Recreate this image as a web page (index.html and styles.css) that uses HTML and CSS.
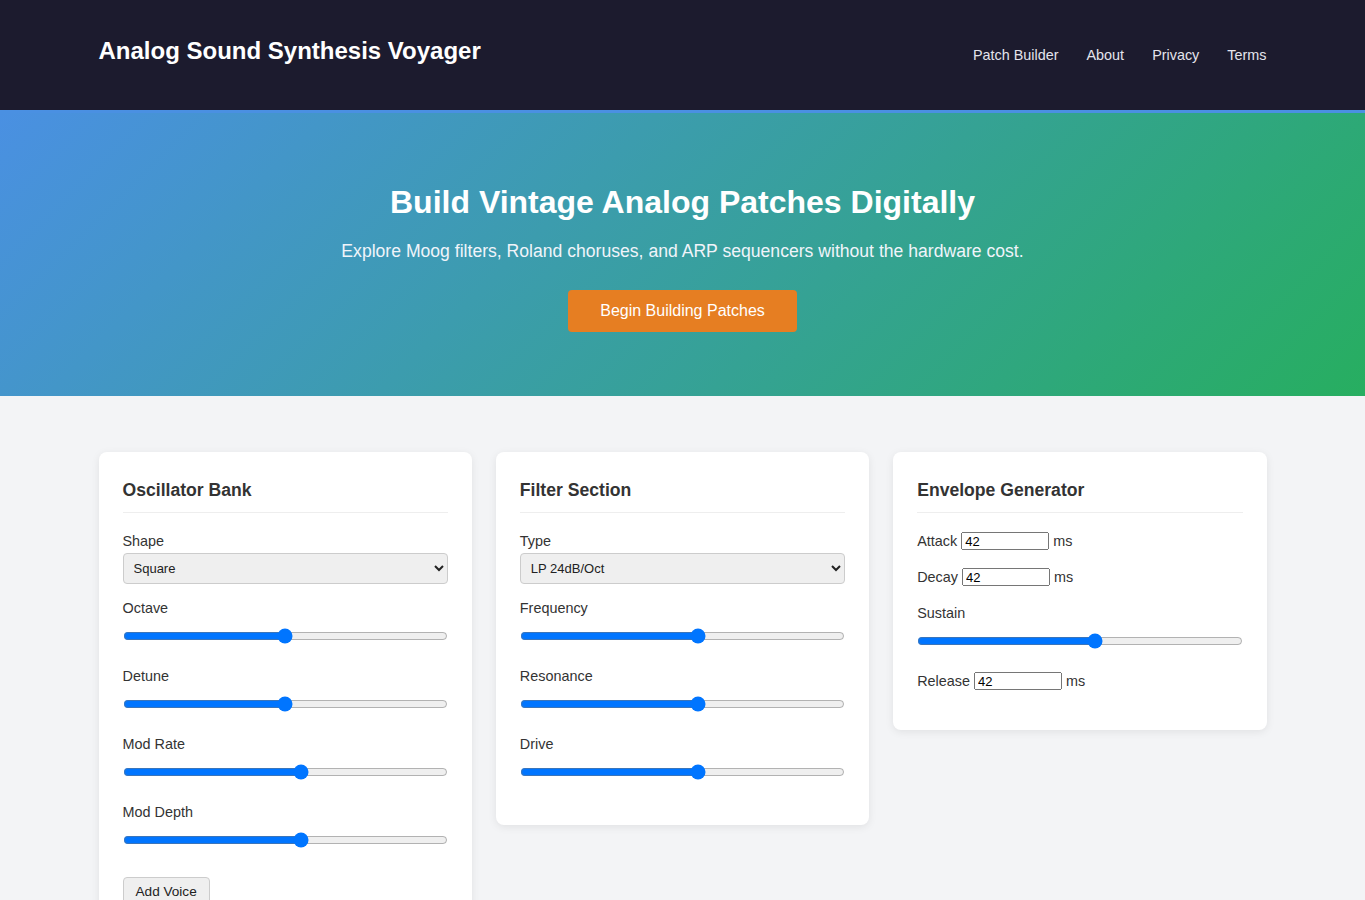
FILE: index.html
```html
<!DOCTYPE html>
<html lang="en">
<head>
    <meta charset="UTF-8">
    <meta name="viewport" content="width=device-width, initial-scale=1.0">
    <title>Analog Sound Synthesis Voyager</title>
    <link rel="stylesheet" href="styles.css">
</head>
<body>
    <header class="site-header">
        <div class="container header-inner">
            <h1 class="logo">Analog Sound Synthesis Voyager</h1>
            <nav class="nav">
                <a href="#builder">Patch Builder</a>
                <a href="#about">About</a>
                <a href="#privacy">Privacy</a>
                <a href="#terms">Terms</a>
            </nav>
        </div>
    </header>

    <section class="hero">
        <h2>Build Vintage Analog Patches Digitally</h2>
        <p>Explore Moog filters, Roland choruses, and ARP sequencers without the hardware cost.</p>
        <button type="button" class="cta">Begin Building Patches</button>
    </section>

    <main class="main" id="builder">
        <div class="container panels">
            <div class="card">
                <h3>Oscillator Bank</h3>
                <div class="form-group">
                    <label for="shape">Shape</label>
                    <select id="shape">
                        <option>Square</option>
                        <option>Sawtooth</option>
                        <option>Triangle</option>
                        <option>Sine</option>
                    </select>
                </div>
                <div class="form-group">
                    <label for="octave">Octave</label>
                    <input type="range" id="octave" min="0" max="100" value="50">
                </div>
                <div class="form-group">
                    <label for="detune">Detune</label>
                    <input type="range" id="detune" min="0" max="100" value="50">
                </div>
                <div class="form-group">
                    <label for="modRate">Mod Rate</label>
                    <input type="range" id="modRate" min="0" max="100" value="55">
                </div>
                <div class="form-group">
                    <label for="modDepth">Mod Depth</label>
                    <input type="range" id="modDepth" min="0" max="100" value="55">
                </div>
                <button type="button" class="small-btn">Add Voice</button>
            </div>

            <div class="card">
                <h3>Filter Section</h3>
                <div class="form-group">
                    <label for="filterType">Type</label>
                    <select id="filterType">
                        <option>LP 24dB/Oct</option>
                        <option>LP 12dB/Oct</option>
                        <option>HP 12dB/Oct</option>
                        <option>BP</option>
                    </select>
                </div>
                <div class="form-group">
                    <label for="frequency">Frequency</label>
                    <input type="range" id="frequency" min="0" max="100" value="55">
                </div>
                <div class="form-group">
                    <label for="resonance">Resonance</label>
                    <input type="range" id="resonance" min="0" max="100" value="55">
                </div>
                <div class="form-group">
                    <label for="drive">Drive</label>
                    <input type="range" id="drive" min="0" max="100" value="55">
                </div>
            </div>

            <div class="card">
                <h3>Envelope Generator</h3>
                <div class="form-group inline">
                    Attack <input type="text" value="42"> ms
                </div>
                <div class="form-group inline">
                    Decay <input type="text" value="42"> ms
                </div>
                <div class="form-group">
                    <label for="sustain">Sustain</label>
                    <input type="range" id="sustain" min="0" max="100" value="55">
                </div>
                <div class="form-group inline">
                    Release <input type="text" value="42"> ms
                </div>
            </div>
        </div>
    </main>
</body>
</html>
```

FILE: styles.css
```css
body {
    margin: 0;
    font-family: "Liberation Sans", Arial, sans-serif;
    color: #333;
    background-color: #f3f4f6;
}

.container {
    max-width: 1168px;
    margin: 0 auto;
    padding: 0 16px;
}

.site-header {
    background-color: #1c1b2e;
    border-bottom: 3px solid #4a90e2;
    padding: 37px 0 45px;
}

.header-inner {
    display: flex;
    justify-content: space-between;
    align-items: flex-start;
}

.logo {
    margin: 0;
    font-size: 24px;
    line-height: 28px;
    color: #fff;
}

.nav {
    display: flex;
    gap: 28px;
    margin-top: 10px;
}

.nav a {
    color: #e4e4ec;
    text-decoration: none;
    font-size: 0.9rem;
}

.hero {
    background: linear-gradient(135deg, #4a90e2 0%, #27ae60 100%);
    color: #fff;
    text-align: center;
    padding: 71px 16px 64px;
}

.hero h2 {
    margin: 0 0 20px;
    font-size: 32px;
}

.hero p {
    margin: 0 0 28px;
    font-size: 1.1rem;
    color: #f0f4fa;
}

.cta {
    background-color: #e67e22;
    color: #fff;
    border: none;
    border-radius: 4px;
    padding: 12px 32px;
    font-family: inherit;
    font-size: 16px;
    cursor: pointer;
}

.main {
    padding: 56px 0 48px;
}

.panels {
    display: grid;
    grid-template-columns: repeat(3, 1fr);
    gap: 24px;
    align-items: start;
}

.card {
    background: #fff;
    border-radius: 8px;
    box-shadow: 0 2px 8px rgba(0, 0, 0, 0.08);
    padding: 24px 24px 21px;
}

.card h3 {
    margin: 0 0 20px;
    font-size: 1.1rem;
    line-height: 28px;
    padding-bottom: 8px;
    border-bottom: 1px solid #eee;
}

.form-group {
    margin-bottom: 16px;
    font-size: 0.9rem;
}

.form-group label {
    display: block;
    margin-bottom: 4px;
}

.form-group.inline {
    display: flex;
    align-items: center;
    gap: 4px;
    height: 16px;
    margin-bottom: 20px;
}

select {
    width: 100%;
    padding: 6px 6px;
    background-color: #efefef;
    border: 1px solid #ccc;
    border-radius: 4px;
    color: #222;
    font-family: inherit;
    font-size: 13px;
}

input[type="range"] {
    width: 100%;
    margin: 8px 0 8px;
}

.inline input[type="text"] {
    width: 88px;
    height: 18px;
    box-sizing: border-box;
    padding: 0 2px;
    font-family: inherit;
    font-size: 13px;
}

.small-btn {
    margin-top: 5px;
    padding: 6px 12px;
    background-color: #efefef;
    border: 1px solid #ccc;
    border-radius: 4px;
    color: #222;
    font-family: inherit;
    font-size: 0.85rem;
}
```
